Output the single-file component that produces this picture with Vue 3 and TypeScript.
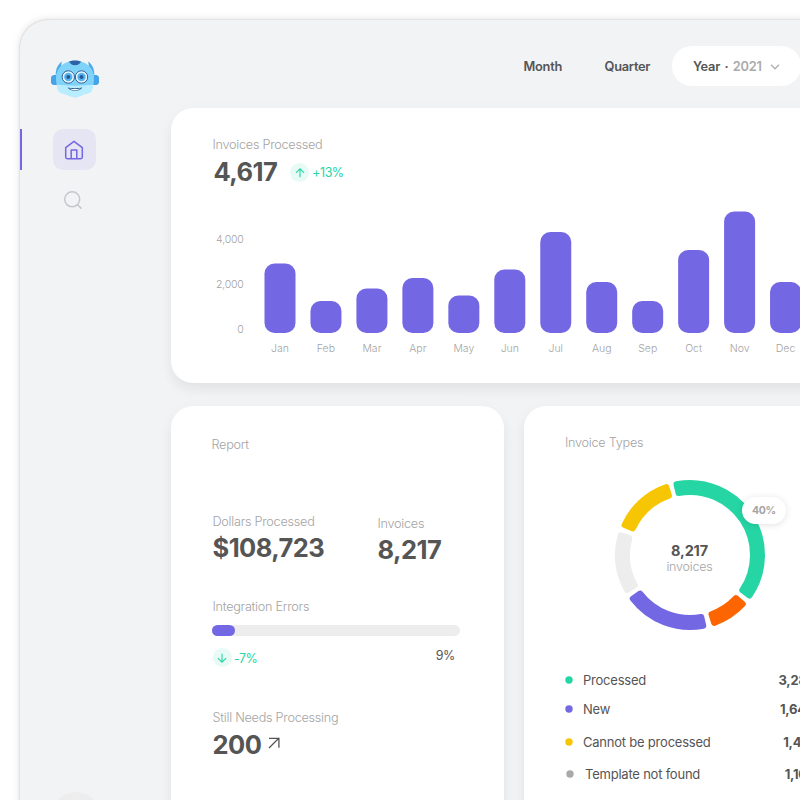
<script setup lang="ts">
interface MonthBar { name: string; height: number }
interface Segment { color: string; from: number; to: number }
interface LegendRow { key: string; label: string; value: string; color: string }

const months: MonthBar[] = [
  { name: 'Jan', height: 69.5 },
  { name: 'Feb', height: 32 },
  { name: 'Mar', height: 44.5 },
  { name: 'Apr', height: 55 },
  { name: 'May', height: 37.5 },
  { name: 'Jun', height: 63.5 },
  { name: 'Jul', height: 101 },
  { name: 'Aug', height: 51 },
  { name: 'Sep', height: 32 },
  { name: 'Oct', height: 83 },
  { name: 'Nov', height: 121.5 },
  { name: 'Dec', height: 51 },
]

const ticks: string[] = ['4,000', '2,000', '0']

const legend: LegendRow[] = [
  { key: 'processed', label: 'Processed', value: '3,287', color: '#26d5a4' },
  { key: 'new', label: 'New', value: '1,643', color: '#7367e3' },
  { key: 'cannot', label: 'Cannot be processed', value: '1,471', color: '#f6c503' },
  { key: 'template', label: 'Template not found', value: '1,107', color: '#a9a9a9' },
]

const segments: Segment[] = [
  { color: '#26d5a4', from: -13.2, to: 126.7 },
  { color: '#fd6500', from: 130.5, to: 162.8 },
  { color: '#7367e3', from: 167, to: 235 },
  { color: '#ededed', from: 238.6, to: 288.2 },
  { color: '#f6c503', from: 292.3, to: 343.2 },
]

const CENTER = 76
const CORNER = 3

function point(radius: number, degrees: number, side: number): string {
  // Keep a constant distance from the radial edge so the corners stay even.
  const angle = (degrees * Math.PI) / 180 + side * Math.asin(CORNER / radius)
  return `${(CENTER + radius * Math.sin(angle)).toFixed(2)} ${(CENTER - radius * Math.cos(angle)).toFixed(2)}`
}

function arc(segment: Segment): string {
  const outer = 75 - CORNER
  const inner = 60 + CORNER
  return [
    `M${point(outer, segment.from, 1)}`,
    `A${outer} ${outer} 0 0 1 ${point(outer, segment.to, -1)}`,
    `L${point(inner, segment.to, -1)}`,
    `A${inner} ${inner} 0 0 0 ${point(inner, segment.from, 1)}Z`,
  ].join('')
}
</script>

<template>
  <div class="page">
    <div class="shell">
      <aside class="sidebar">
        <svg class="robot" width="48" height="38" viewBox="0 0 48 38">
          <path d="M10.8 1.6C6.5 5 4.8 9 4.6 15L9 13Z" fill="#4aa9ea" />
          <path d="M37.2 1.6C41.5 5 43.2 9 43.4 15L39 13Z" fill="#4aa9ea" />
          <path d="M5.5 15H2.500Q0 15.500 0 17.500V22Q0 24.500 3 25H7Z" fill="#45a4e8" />
          <path d="M42.500 15H45.500Q48 15.500 48 17.500V22Q48 24.500 45 25H41Z" fill="#45a4e8" />
          <path d="M24 .8C13 .8 5 8 5 18C5 21.500 5.500 24.500 6.500 27H41.500C42.500 24.500 43 21.500 43 18C43 8 35 .8 24 .8Z" fill="#7fd3f9" />
          <path d="M5.800 24.500C15 26 33 26 42.200 24.500C42 28.500 41.200 31 39.500 32.500C35 34 30 35.500 27 37C25 38 23 38 21 37C18 35.500 13 34 8.500 32.500C6.800 31 6 28.500 5.800 24.500Z" fill="#b8ecff" />
          <path d="M18 1.600C21 0 27 0 30 1.600C29 4 27 5.200 24 5.200S19 4 18 1.600Z" fill="#2d62a6" />
          <g fill="#eafaff" stroke="#315d98" stroke-width="1">
            <circle cx="17.300" cy="17" r="6.200" />
            <circle cx="30.500" cy="17" r="6.200" />
          </g>
          <g fill="#55b3ee">
            <circle cx="17.300" cy="17" r="4.200" />
            <circle cx="30.500" cy="17" r="4.200" />
          </g>
          <g fill="#285995">
            <circle cx="17.300" cy="17" r="2" />
            <circle cx="30.500" cy="17" r="2" />
          </g>
          <path d="M16.500 27.300C20 28.500 28 28.500 31.500 27.300C29.500 32 18.500 32 16.500 27.300Z" fill="#2f6199" />
          <path d="M18.500 28.500C22 29.300 26 29.300 29.500 28.500C27 30.700 21 30.700 18.500 28.500Z" fill="#fff" />
        </svg>
        <nav class="menu">
          <a class="menu-item active">
            <svg width="20" height="20" viewBox="0 0 20 20" fill="none" stroke="#7367e3" stroke-width="1.500" stroke-linejoin="round" stroke-linecap="round">
              <path d="M1.700 7.600L10 1.300L18.300 7.600V17.100Q18.300 18.700 16.700 18.700H3.300Q1.700 18.700 1.700 17.100Z" />
              <path d="M7.200 18.300V10H12.800V18.300" />
            </svg>
          </a>
          <a class="menu-item">
            <svg width="20" height="20" viewBox="0 0 20 20" fill="none" stroke="#c4c7ce" stroke-width="1.500" stroke-linecap="round">
              <circle cx="9.200" cy="9.300" r="7.500" />
              <path d="M14.600 14.700L18 18.100" />
            </svg>
          </a>
        </nav>
        <div class="avatar"></div>
      </aside>

      <main class="content">
        <header class="periods">
          <span class="period month">Month</span>
          <span class="period quarter">Quarter</span>
          <div class="year">
            <span class="period">Year</span>
            <span class="period separator">·</span>
            <span class="period muted">2021</span>
            <svg width="10" height="6" viewBox="0 0 10 6" fill="none" stroke="#b0b0b0" stroke-width="1.300">
              <path d="M1 .8L5 4.800L9 .8" />
            </svg>
          </div>
        </header>

        <section class="card chart-card">
          <div class="label">Invoices Processed</div>
          <div class="headline">
            <span class="figure">4,617</span>
            <span class="trend">
              <i class="trend-icon">
                <svg width="10" height="10" viewBox="0 0 10 10" fill="none" stroke="#26d5a4" stroke-width="1.100">
                  <path d="M5 9.300V.9M.9 4.800L5 .8L9.100 4.800" />
                </svg>
              </i>
              <span class="trend-text">+13%</span>
            </span>
          </div>
          <div class="chart">
            <div class="axis">
              <span v-for="tick in ticks" :key="tick">{{ tick }}</span>
            </div>
            <svg class="bars" width="552" height="144" viewBox="0 0 552 144">
              <rect
                v-for="(month, index) in months"
                :key="month.name"
                :x="index * 45.96 + 7.5"
                :y="122 - month.height"
                width="31"
                :height="month.height"
                rx="10"
                fill="#7367e3"
              />
              <text
                v-for="(month, index) in months"
                :key="month.name"
                :x="index * 45.96 + 23"
                y="141"
                text-anchor="middle"
              >{{ month.name }}</text>
            </svg>
          </div>
        </section>

        <div class="lower">
          <section class="card report-card">
            <div class="label report-title">Report</div>
            <div class="totals">
              <div class="dollars">
                <div class="label">Dollars Processed</div>
                <div class="figure">$108,723</div>
              </div>
              <div class="invoices">
                <div class="label">Invoices</div>
                <div class="figure">8,217</div>
              </div>
            </div>
            <div class="label errors-title">Integration Errors</div>
            <div class="track"><div class="track-fill"></div></div>
            <div class="errors">
              <span class="trend">
                <i class="trend-icon">
                  <svg width="10" height="10" viewBox="0 0 10 10" fill="none" stroke="#26d5a4" stroke-width="1.100">
                    <path d="M5 .7V9.100M.9 5.200L5 9.200L9.100 5.200" />
                  </svg>
                </i>
                <span class="trend-text">-7%</span>
              </span>
              <span class="share">9%</span>
            </div>
            <div class="label pending-title">Still Needs Processing</div>
            <div class="pending">
              <span class="figure">200</span>
              <svg width="12" height="12" viewBox="0 0 12 12" fill="none" stroke="#555" stroke-width="1.300">
                <path d="M1 11L11 1M1 1.300H10.900V10.700" />
              </svg>
            </div>
          </section>

          <section class="card types-card">
            <div class="label types-title">Invoice Types</div>
            <div class="donut">
              <svg width="152" height="152" viewBox="0 0 152 152">
                <path
                  v-for="segment in segments"
                  :key="segment.from"
                  :d="arc(segment)"
                  :fill="segment.color"
                  :stroke="segment.color"
                  stroke-width="6"
                  stroke-linejoin="round"
                />
              </svg>
              <div class="donut-center">
                <strong>8,217</strong>
                <span>invoices</span>
              </div>
              <div class="bubble">40%</div>
            </div>
            <ul class="legend">
              <li v-for="row in legend" :key="row.key" :class="row.key">
                <svg width="8" height="8" viewBox="0 0 8 8"><circle cx="4" cy="4" r="3.700" :fill="row.color" /></svg>
                <span class="legend-label">{{ row.label }}</span>
                <span class="legend-value">{{ row.value }}</span>
              </li>
            </ul>
          </section>
        </div>
      </main>
    </div>
  </div>
</template>

<style>
body {
  background: #fff;
  overflow: hidden;
}
</style>

<style scoped>
.page {
  box-sizing: border-box;
  width: 800px;
  height: 800px;
  padding: 20px 0 0 20px;
  overflow: hidden;
  background: #fff;
  color: #555;
  font-family: Inter, sans-serif;
}
.shell {
  display: flex;
  width: 860px;
  height: 860px;
  border-radius: 28px 0 0 0;
  background: #f2f3f5;
  box-shadow: 0 0 2px rgba(0, 0, 0, 0.2), 0 0 9px rgba(0, 0, 0, 0.13);
}
.sidebar {
  display: flex;
  flex-direction: column;
  flex: none;
  width: 151px;
}
.robot {
  margin: 40px 0 0 31px;
}
.menu {
  display: flex;
  flex-direction: column;
  gap: 9px;
  margin-top: 31px;
}
.menu-item {
  position: relative;
  display: flex;
  align-items: center;
  justify-content: center;
  width: 43px;
  height: 41px;
  margin-left: 33px;
  border-radius: 10px;
}
.menu-item:not(.active) svg {
  margin-right: 3px;
}
.menu-item.active {
  background: #e6e5f3;
}
.menu-item.active svg {
  margin: 1px 1px 0 0;
}
.menu-item.active::before {
  content: '';
  position: absolute;
  left: -33px;
  top: 0;
  width: 2px;
  height: 41px;
  background: #7367e3;
}
.avatar {
  width: 48px;
  height: 48px;
  margin: 572px 0 0 32px;
  border-radius: 50%;
  background: #ededee;
}
.content {
  flex: none;
  width: 709px;
}
.periods {
  display: flex;
  align-items: center;
  height: 40px;
  padding: 26px 0 22px 352.500px;
}
.period {
  padding-top: 2px;
  font-size: 12.800px;
  font-weight: 600;
  letter-spacing: -0.250px;
  line-height: 20px;
}
.month {
  width: 81px;
}
.quarter {
  width: 67.500px;
}
.year {
  display: flex;
  align-items: center;
  box-sizing: border-box;
  width: 129px;
  height: 40px;
  padding-left: 21px;
  border-radius: 20px;
  background: #fff;
}
.separator {
  margin: 0 4.500px;
}
.muted {
  color: #aaa;
}
.year svg {
  margin: 2px 0 0 8.500px;
}
.card {
  box-sizing: border-box;
  border-radius: 22px;
  background: #fff;
  box-shadow: 0 8px 14px -2px rgba(30, 32, 38, 0.055), 0 3px 16px rgba(30, 32, 38, 0.035);
}
.label {
  color: #a4a4a4;
  font-size: 12.700px;
  font-weight: 300;
  letter-spacing: -0.270px;
  line-height: 20px;
  white-space: nowrap;
}
.figure {
  font-size: 25.500px;
  font-weight: 700;
  letter-spacing: -0.550px;
  line-height: 34px;
}
.chart-card {
  height: 275px;
  padding: 27px 0 0 41.500px;
}
.headline {
  display: flex;
  align-items: center;
  height: 34px;
  padding-left: 1px;
}
.headline .trend {
  margin: 1px 0 0 13px;
}
.trend {
  display: flex;
  align-items: center;
}
.trend-icon {
  display: flex;
  align-items: center;
  justify-content: center;
  width: 19px;
  height: 19px;
  border-radius: 50%;
  background: #e7faf5;
}
.trend-text {
  margin-left: 3px;
  padding-top: 1px;
  color: #26d5a4;
  font-size: 12.500px;
  letter-spacing: -0.5px;
  line-height: 20px;
}
.chart {
  display: flex;
  height: 166px;
}
.axis {
  display: flex;
  flex-direction: column;
  justify-content: space-between;
  width: 31px;
  height: 106px;
  padding-top: 43px;
  color: #a4a4a4;
  font-size: 10.500px;
  font-weight: 300;
  letter-spacing: -0.2px;
  line-height: 16px;
  text-align: right;
}
.bars {
  display: block;
  margin: 22px 0 0 13px;
  fill: #a4a4a4;
  font-size: 10.500px;
  font-weight: 300;
}
.lower {
  display: flex;
  gap: 20px;
  margin-top: 23px;
}
.report-card {
  width: 333px;
  height: 460px;
  padding: 29px 0 0 41.500px;
}
.report-title {
  margin-left: -1px;
}
.totals {
  display: flex;
  align-items: flex-start;
  margin-top: 57px;
}
.totals .figure {
  margin-top: -1px;
}
.dollars {
  width: 165px;
}
.invoices {
  padding-top: 2px;
}
.errors-title {
  margin-top: 30px;
}
.track {
  width: 248px;
  height: 11px;
  margin: 7.500px 0 0 -0.200px;
  border-radius: 6px;
  background: #ededed;
}
.track-fill {
  width: 9%;
  height: 11px;
  border-radius: 6px;
  background: #7367e3;
}
.errors {
  display: flex;
  align-items: center;
  justify-content: space-between;
  width: 242px;
  height: 20px;
  margin-top: 12px;
}
.errors .trend-text {
  margin-left: 2.500px;
  padding-top: 2px;
}
.share {
  margin-bottom: 5px;
  font-size: 12.500px;
  letter-spacing: -0.7px;
}
.pending-title {
  margin-top: 40.500px;
}
.pending {
  display: flex;
  align-items: center;
  margin-top: -0.5px;
}
.pending svg {
  margin: 0 0 4px 7px;
}
.types-card {
  width: 336px;
  height: 460px;
  padding: 27px 0 0 41px;
}
.donut {
  position: relative;
  width: 152px;
  height: 152px;
  margin: 26px 0 0 49px;
}
.donut svg {
  display: block;
}
.donut-center {
  position: absolute;
  inset: 0;
  display: flex;
  flex-direction: column;
  align-items: center;
  justify-content: center;
  padding: 7px 1px 0 0;
  box-sizing: border-box;
}
.donut-center strong {
  font-size: 14.500px;
  font-weight: 700;
  letter-spacing: -0.2px;
  line-height: 17px;
}
.donut-center span {
  color: #a4a4a4;
  font-size: 12.500px;
  font-weight: 300;
  letter-spacing: -0.2px;
  line-height: 16px;
}
.bubble {
  position: absolute;
  left: 128px;
  top: 18px;
  width: 44px;
  height: 27px;
  border-radius: 14px;
  background: #fff;
  box-shadow: 0 1px 7px rgba(0, 0, 0, 0.12);
  color: #a4a4a4;
  font-size: 10.500px;
  font-weight: 700;
  letter-spacing: -0.3px;
  line-height: 27px;
  text-align: center;
}
.legend {
  width: 249px;
  margin: 39px 0 0;
  padding: 0;
  list-style: none;
}
.legend li {
  display: flex;
  align-items: center;
  height: 20px;
  font-size: 13px;
  letter-spacing: -0.220px;
  line-height: 20px;
}
.legend-label {
  flex: 1;
  margin-left: 10px;
}
.legend-value {
  font-weight: 700;
}
.legend .new {
  margin-top: 9px;
}
.legend .cannot {
  margin-top: 12.500px;
}
.legend .template {
  margin-top: 12px;
  padding-left: 1px;
}
.template .legend-label {
  margin-left: 11px;
}
</style>
